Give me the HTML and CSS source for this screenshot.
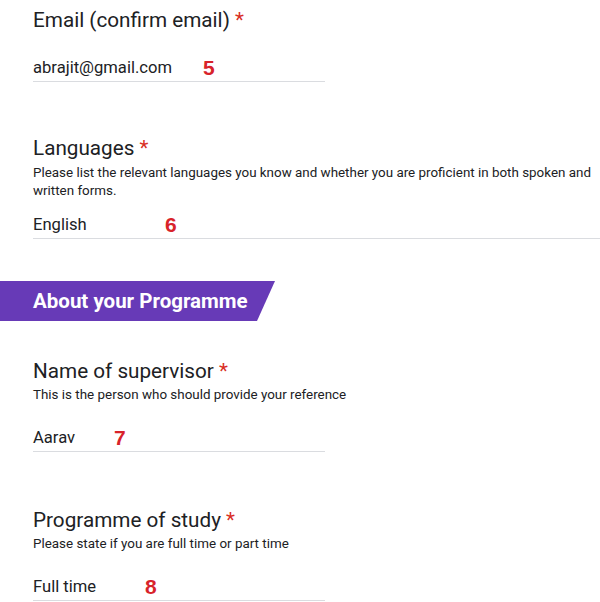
FILE: index.html
```html
<!DOCTYPE html>
<html lang="en">
<head>
  <meta charset="UTF-8" />
  <meta name="viewport" content="width=device-width, initial-scale=1.0" />
  <title>Application form</title>
  <link rel="stylesheet" href="styles.css">
</head>
<body>
  <main class="form">
    <div class="question q-email">
      <div class="q-title">Email (confirm email) <span class="req">*</span></div>
      <div class="answer short">abrajit@gmail.com<span class="mark mark-5">5</span></div>
    </div>

    <div class="question q-lang">
      <div class="q-title">Languages <span class="req">*</span></div>
      <div class="q-desc">Please list the relevant languages you know and whether you are proficient in both spoken and written forms.</div>
      <div class="answer long">English<span class="mark mark-6">6</span></div>
    </div>

    <div class="section-head">
      <h2>About your Programme</h2>
    </div>

    <div class="question q-super">
      <div class="q-title">Name of supervisor <span class="req">*</span></div>
      <div class="q-desc">This is the person who should provide your reference</div>
      <div class="answer short">Aarav<span class="mark mark-7">7</span></div>
    </div>

    <div class="question q-study">
      <div class="q-title">Programme of study <span class="req">*</span></div>
      <div class="q-desc">Please state if you are full time or part time</div>
      <div class="answer short">Full time<span class="mark mark-8">8</span></div>
    </div>
  </main>
</body>
</html>
```

FILE: styles.css
```css
body {
  font-family: Roboto, 'Liberation Sans', sans-serif;
  background-color: #ffffff;
  color: #202124;
  margin: 0;
  padding: 0;
}
.form {
  padding-top: 8px;
}
.question {
  padding-left: 33px;
}
.q-title {
  font-size: 20.7px;
  line-height: 24px;
}
.req {
  color: #d93025;
}
.q-desc {
  font-size: 13.4px;
  line-height: 18px;
  margin-top: 3px;
  padding-right: 2px;
}
.answer {
  position: relative;
  font-size: 16.6px;
  line-height: 24px;
  padding-bottom: 1px;
  border-bottom: 1px solid #dadce0;
  margin-top: 24px;
}
.q-desc + .answer {
  margin-top: 22px;
}
.answer.short {
  width: 292px;
}
.q-lang .q-desc {
  margin-top: 4px;
}
.q-lang .answer {
  margin-top: 13px;
}
.mark {
  position: absolute;
  top: 0;
  font-family: 'Liberation Sans', Arial, sans-serif;
  font-weight: bold;
  font-size: 21px;
  color: #d8232a;
}
.mark-5 { left: 170px; }
.mark-6 { left: 132px; }
.mark-7 { left: 81px; }
.mark-8 { left: 112px; }

.q-lang {
  margin-top: 54px;
}
.section-head {
  margin-top: 42px;
  width: 275px;
  height: 40px;
  background-color: #673ab7;
  clip-path: polygon(0 0, 100% 0, calc(100% - 18px) 100%, 0 100%);
}
.section-head h2 {
  margin: 0;
  padding-left: 33px;
  color: #ffffff;
  font-size: 20.5px;
  font-weight: 700;
  line-height: 41px;
}
.q-super {
  margin-top: 38px;
}
.q-study {
  margin-top: 56px;
}
```
